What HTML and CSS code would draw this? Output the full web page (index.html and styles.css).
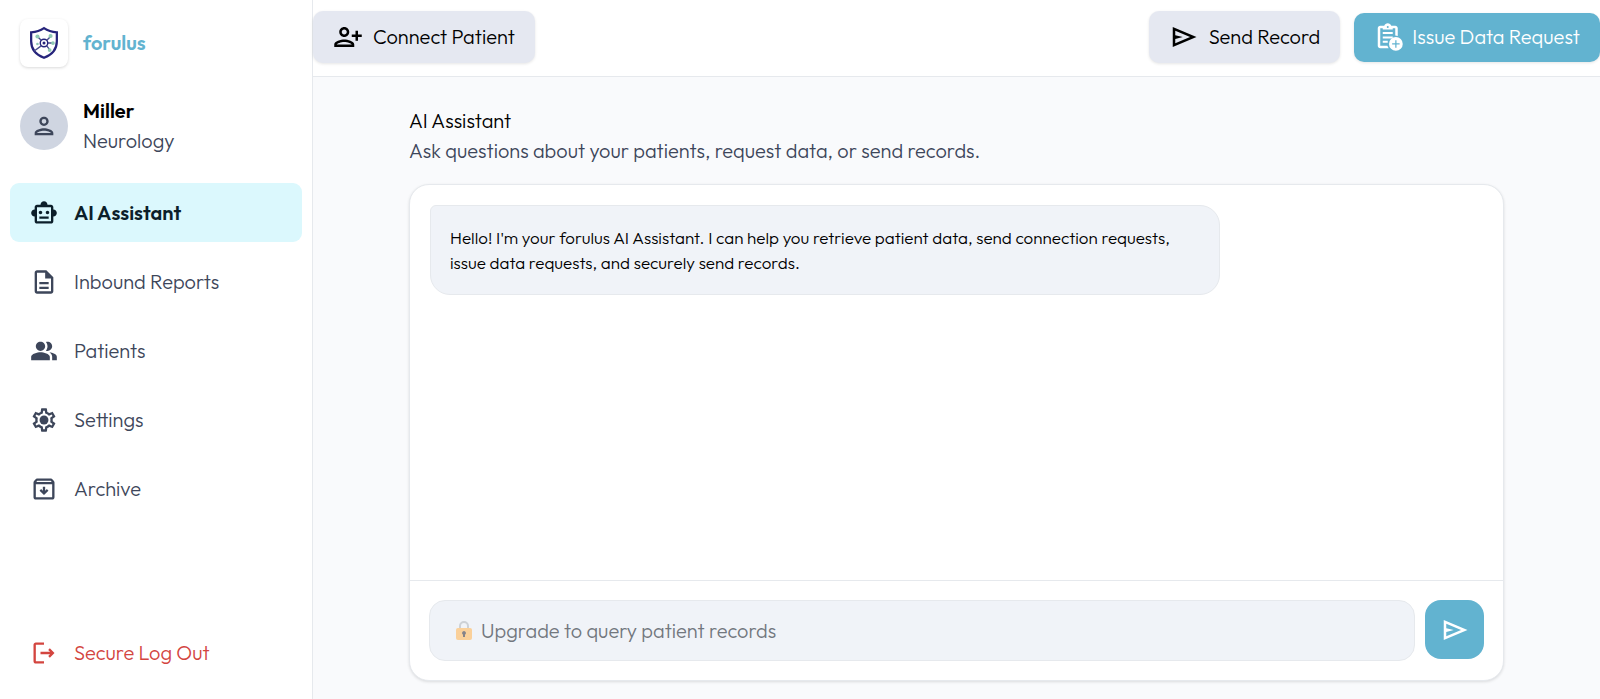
FILE: index.html
```html
<!DOCTYPE html>
<html lang="en">
<head>
    <meta charset="UTF-8" />
    <meta name="viewport" content="width=device-width, initial-scale=1">
    <title>forulus - AI Assistant</title>
    <link rel="stylesheet" href="styles.css">
</head>
<body>
<aside class="sidebar">
    <div class="brand">
        <div class="brand-logo">
            <svg viewBox="0 0 32 36" width="30" height="34" fill="none">
                <path d="M16 2.200C12 5 7.500 6.300 2.300 6.600V16c0 8.500 5.400 14.500 13.700 17.800C24.300 30.500 29.700 24.500 29.700 16V6.600C24.500 6.300 20 5 16 2.200Z" stroke="#26247b" stroke-width="2.400"/>
                <path d="M5.500 26.500 13 21M19 15l4-4M13 15 9 11M20 18h5M19 21l3 4" stroke="#4a4f8c" stroke-width="1.500"/>
                <circle cx="16" cy="18" r="4" stroke="#26247b" stroke-width="1.500"/>
                <circle cx="16" cy="18" r="1.600" fill="#26247b"/>
                <g fill="#8fc9b4"><circle cx="9" cy="11" r="2.200"/><circle cx="23" cy="10.500" r="2.200"/><circle cx="25.500" cy="18" r="2"/><circle cx="22" cy="25.500" r="2"/><circle cx="9" cy="19" r="1.400"/></g>
            </svg>
        </div>
        <span class="brand-name">forulus</span>
    </div>
    <div class="profile">
        <div class="avatar">
            <svg class="icon" viewBox="0 0 24 24"><path d="M12 6a2 2 0 1 1 0 4 2 2 0 0 1 0-4m0 10c2.700 0 5.800 1.290 6 2H6c.230-.720 3.310-2 6-2m0-12C9.790 4 8 5.790 8 8s1.790 4 4 4 4-1.790 4-4-1.790-4-4-4m0 10c-2.670 0-8 1.340-8 4v2h16v-2c0-2.660-5.330-4-8-4"/></svg>
        </div>
        <div>
            <div class="profile-name">Miller</div>
            <div class="profile-role">Neurology</div>
        </div>
    </div>
    <nav class="nav">
        <a class="nav-item active" href="#">
            <svg class="icon" viewBox="0 0 24 24"><path d="M20 9V7c0-1.100-.900-2-2-2h-3c0-1.660-1.340-3-3-3S9 3.340 9 5H6c-1.100 0-2 .900-2 2v2c-1.660 0-3 1.340-3 3s1.340 3 3 3v4c0 1.100.900 2 2 2h12c1.100 0 2-.900 2-2v-4c1.660 0 3-1.340 3-3s-1.340-3-3-3m-2 10H6V7h12zm-9-6c-.830 0-1.500-.670-1.500-1.500S8.170 10 9 10s1.500.670 1.500 1.500S9.830 13 9 13m7.500-1.500c0 .830-.670 1.500-1.500 1.500s-1.500-.670-1.500-1.500.670-1.500 1.500-1.500 1.500.670 1.500 1.500M8 15h8v2H8z"/></svg>
            AI Assistant
        </a>
        <a class="nav-item" href="#">
            <svg class="icon" viewBox="0 0 24 24"><path d="M8 16h8v2H8zm0-4h8v2H8zm6-10H6c-1.100 0-2 .900-2 2v16c0 1.100.890 2 1.990 2H18c1.100 0 2-.900 2-2V8zm4 18H6V4h7v5h5z"/></svg>
            Inbound Reports
        </a>
        <a class="nav-item" href="#">
            <svg class="icon" viewBox="0 0 24 24"><path d="M16.670 13.130C18.040 14.060 19 15.320 19 17v3h4v-3c0-2.180-3.570-3.470-6.330-3.870M15 12c2.210 0 4-1.790 4-4s-1.790-4-4-4c-.470 0-.910.100-1.330.240C14.500 5.270 15 6.580 15 8s-.500 2.730-1.330 3.760c.420.140.860.240 1.330.240M9 12c2.210 0 4-1.790 4-4s-1.790-4-4-4-4 1.790-4 4 1.790 4 4 4m0 1c-2.670 0-8 1.340-8 4v3h16v-3c0-2.660-5.330-4-8-4"/></svg>
            Patients
        </a>
        <a class="nav-item" href="#">
            <svg class="icon" viewBox="0 0 24 24"><path d="M19.430 12.980c.040-.320.070-.640.070-.980s-.030-.660-.070-.980l2.110-1.650c.190-.150.240-.420.120-.640l-2-3.460c-.090-.160-.260-.250-.440-.250-.060 0-.120.010-.170.030l-2.490 1c-.520-.400-1.080-.730-1.690-.980l-.380-2.650C14.460 2.180 14.250 2 14 2h-4c-.250 0-.460.180-.490.420l-.380 2.650c-.610.250-1.170.590-1.690.980l-2.490-1c-.060-.020-.120-.030-.180-.030-.170 0-.340.090-.430.250l-2 3.460c-.130.220-.070.490.120.640l2.110 1.650c-.040.320-.070.650-.070.980s.030.660.070.980l-2.110 1.650c-.190.150-.240.420-.120.640l2 3.460c.090.160.260.250.440.250.060 0 .120-.010.170-.030l2.490-1c.520.400 1.080.730 1.690.980l.380 2.650c.030.240.240.420.490.420h4c.250 0 .460-.180.490-.420l.380-2.650c.610-.250 1.170-.590 1.690-.980l2.490 1c.060.020.120.030.180.030.170 0 .340-.090.430-.250l2-3.460c.120-.220.070-.490-.120-.640zm-1.980-1.710c.040.310.050.520.050.730s-.020.430-.050.730l-.140 1.130.890.700 1.080.840-.700 1.210-1.270-.510-1.040-.420-.900.680c-.430.320-.840.560-1.250.730l-1.060.430-.160 1.130-.200 1.350h-1.400l-.190-1.350-.160-1.130-1.060-.430c-.430-.180-.830-.410-1.230-.710l-.910-.700-1.060.430-1.270.510-.700-1.210 1.080-.840.890-.700-.140-1.130c-.030-.310-.050-.540-.050-.740s.020-.430.050-.730l.140-1.130-.890-.700-1.080-.840.700-1.210 1.270.510 1.040.420.900-.680c.430-.320.840-.560 1.250-.730l1.060-.430.160-1.130.200-1.350h1.390l.190 1.350.160 1.130 1.060.430c.430.180.830.410 1.230.710l.910.700 1.060-.430 1.270-.510.700 1.210-1.070.850-.890.700z"/><circle cx="12" cy="12" r="3.800"/></svg>
            Settings
        </a>
        <a class="nav-item" href="#">
            <svg class="icon" viewBox="0 0 24 24"><path d="m20.540 5.230-1.390-1.680C18.880 3.210 18.470 3 18 3H6c-.470 0-.880.210-1.160.550L3.460 5.230C3.170 5.570 3 6.020 3 6.500V19c0 1.100.900 2 2 2h14c1.100 0 2-.900 2-2V6.500c0-.480-.170-.930-.460-1.270M6.240 5h11.520l.830 1H5.420zM5 19V8h14v11zm8-9h-2v3.500l-1.500-1.400L8.200 13.400 12 17.200l3.800-3.800-1.300-1.300-1.500 1.400z"/></svg>
            Archive
        </a>
    </nav>
    <button class="nav-item logout" type="button">
        <svg class="icon" viewBox="0 0 24 24"><path d="m17 8-1.400 1.400 1.600 1.600H9v2h8.200l-1.600 1.600L17 16l4-4zM5 5h7V3H5c-1.100 0-2 .900-2 2v14c0 1.100.900 2 2 2h7v-2H5z"/></svg>
        Secure Log Out
    </button>
</aside>

<div class="page">
    <header class="topbar">
        <button class="btn" type="button">
            <svg class="icon" viewBox="0 0 24 24"><path d="M9 12c2.210 0 4-1.790 4-4s-1.790-4-4-4-4 1.790-4 4 1.790 4 4 4m0-6c1.100 0 2 .900 2 2s-.900 2-2 2-2-.900-2-2 .900-2 2-2m0 8c-2.670 0-8 1.340-8 4v2h16v-2c0-2.660-5.330-4-8-4m6 4H3c.200-.710 3.300-2 6-2s5.800 1.290 6 2m5-8V7h-2v3h-3v2h3v3h2v-3h3v-2z"/></svg>
            Connect Patient
        </button>
        <div class="topbar-actions">
            <button class="btn" type="button">
                <svg class="icon" viewBox="0 0 24 24"><path d="M3 20V4l19 8zm2-3 11.850-5L5 7v3.500l6 1.500-6 1.500z"/></svg>
                Send Record
            </button>
            <button class="btn btn-primary" type="button">
                <svg class="icon" viewBox="0 0 24 24"><path d="M19 11.100V5c0-1.100-.900-2-2-2h-3.180C13.400 1.840 12.300 1 11 1s-2.400.840-2.820 2H5c-1.100 0-2 .900-2 2v14c0 1.100.900 2 2 2h6.700l-1-2H5V5h2v1h8V5h2v5.700zM11 3.200a.800.800 0 1 1 0 1.600.800.800 0 0 1 0-1.600M7 8h8v1.600H7zm0 3.500h8v1.600H7zM7 15h4v1.600H7z"/><path fill-rule="evenodd" d="M17.500 12a5.500 5.500 0 1 1 0 11 5.500 5.500 0 0 1 0-11m-.500 2.500V17h-2.500v1H17v2.500h1V18h2.500v-1H18v-2.500z"/></svg>
                Issue Data Request
            </button>
        </div>
    </header>

    <main class="content">
        <div class="heading">
            <h1>AI Assistant</h1>
            <p>Ask questions about your patients, request data, or send records.</p>
        </div>
        <section class="chat">
            <div class="messages">
                <div class="bubble">Hello! I'm your forulus AI Assistant. I can help you retrieve patient data, send connection requests, issue data requests, and securely send records.</div>
            </div>
            <form class="composer">
                <label class="query">
                    <svg class="lock" viewBox="0 0 18 20" width="18" height="20">
                        <path d="M5 9V5a4 4 0 0 1 8 0v4" fill="none" stroke="#cdd1d6" stroke-width="2"/>
                        <rect x="1" y="7" width="16" height="12" rx="2" fill="#fad09a"/>
                        <path d="M9 10a2 2 0 0 1 1 3.700V16H8v-2.300A2 2 0 0 1 9 10" fill="#85838a"/>
                    </svg>
                    <input type="text" placeholder="Upgrade to query patient records" aria-label="Upgrade to query patient records">
                </label>
                <button class="send" type="button" aria-label="Send">
                    <svg class="icon" viewBox="0 0 24 24"><path d="M3 20V4l19 8zm2-3 11.850-5L5 7v3.500l6 1.500-6 1.500z"/></svg>
                </button>
            </form>
        </section>
    </main>
</div>
</body>
</html>
```

FILE: styles.css
```css
:root {
    --accent: #62b3d0;
    --ink: #0b1220;
    --muted: #3d465a;
    --line: #e6e9ed;
    --soft: #e5e8f1;
    --field: #f0f3f8;
    --danger: #d3453f;
}
* { margin: 0; padding: 0; box-sizing: border-box; }
body {
    display: flex;
    height: 100vh;
    font-family: 'Outfit', 'Lato', sans-serif;
    font-size: 20px;
    font-weight: 300;
    line-height: 30px;
    color: var(--ink);
    background: #f9fafc;
}
button, input {
    font: inherit;
    border: none;
}
button { cursor: pointer; }
a { text-decoration: none; }
.icon {
    width: 28px;
    height: 28px;
    fill: currentColor;
    flex-shrink: 0;
}

/* sidebar */
.sidebar {
    display: flex;
    flex-direction: column;
    width: 313px;
    flex-shrink: 0;
    padding: 19px 10px 17px;
    background: #fff;
    border-right: 1px solid var(--line);
}
.brand, .profile {
    display: flex;
    align-items: center;
    gap: 15px;
    padding: 0 10px;
}
.brand-logo {
    display: flex;
    align-items: center;
    justify-content: center;
    width: 48px;
    height: 48px;
    border-radius: 8px;
    box-shadow: 0 1px 3px rgba(0, 0, 0, 0.15);
}
.brand-name {
    font-weight: 600;
    color: var(--accent);
}
.profile { margin: 29px 0 27px; }
.avatar {
    display: flex;
    align-items: center;
    justify-content: center;
    width: 48px;
    height: 48px;
    border-radius: 50%;
    background: #cfd5e1;
    color: var(--muted);
}
.profile-name {
    font-weight: 600;
    color: #000;
}
.profile-role { color: var(--muted); }
.nav {
    display: flex;
    flex-direction: column;
    gap: 10px;
}
.nav-item {
    display: flex;
    align-items: center;
    gap: 16px;
    height: 59px;
    padding: 0 20px;
    border-radius: 9px;
    color: var(--muted);
}
.nav-item.active {
    background: #dbf8fd;
    color: #0c1f2a;
    font-weight: 600;
}
.logout {
    margin-top: auto;
    background: none;
    color: var(--danger);
}

/* top bar */
.page {
    display: flex;
    flex-direction: column;
    flex: 1;
    min-width: 0;
}
.topbar {
    display: flex;
    align-items: center;
    justify-content: space-between;
    height: 77px;
    padding-bottom: 2px;
    background: #fff;
    border-bottom: 1px solid var(--line);
}
.topbar-actions {
    display: flex;
    align-items: center;
    gap: 14px;
}
.btn {
    display: flex;
    align-items: center;
    gap: 10px;
    height: 52px;
    padding: 0 20px;
    border-radius: 10px;
    background: var(--soft);
    color: #000;
    box-shadow: 0 1px 3px rgba(0, 0, 0, 0.1);
}
.btn .icon, .send .icon {
    width: 30px;
    height: 30px;
}
.btn-primary {
    gap: 8px;
    height: 49px;
    background: var(--accent);
    color: #fff;
}

/* chat */
.content {
    display: flex;
    flex-direction: column;
    flex: 1;
    min-height: 0;
    padding: 29px 96px 18px;
}
h1 {
    font-size: 20px;
    font-weight: 300;
    color: #000;
}
.heading { margin-bottom: 18px; }
.heading p { color: var(--muted); }
.chat {
    display: flex;
    flex-direction: column;
    flex: 1;
    min-height: 0;
    background: #fff;
    border: 1px solid var(--line);
    border-radius: 20px;
    box-shadow: 0 1px 3px rgba(0, 0, 0, 0.12);
}
.messages {
    flex: 1;
    padding: 20px;
    overflow: auto;
}
.bubble {
    width: 75%;
    padding: 19px;
    font-size: 17px;
    line-height: 25px;
    color: #000;
    background: var(--field);
    border: 1px solid var(--line);
    border-radius: 6px 20px 20px 20px;
}
.composer {
    display: flex;
    gap: 10px;
    padding: 19px;
    border-top: 1px solid var(--line);
}
.query {
    display: flex;
    align-items: center;
    gap: 8px;
    flex: 1;
    height: 61px;
    padding: 0 25px;
    background: var(--field);
    border: 1px solid var(--line);
    border-radius: 16px;
}
.query input {
    flex: 1;
    background: none;
    outline: none;
    color: var(--ink);
}
.query input::placeholder { color: #72777e; }
.send {
    display: flex;
    align-items: center;
    justify-content: center;
    width: 59px;
    height: 59px;
    border-radius: 16px;
    background: var(--accent);
    color: #fff;
}
```
